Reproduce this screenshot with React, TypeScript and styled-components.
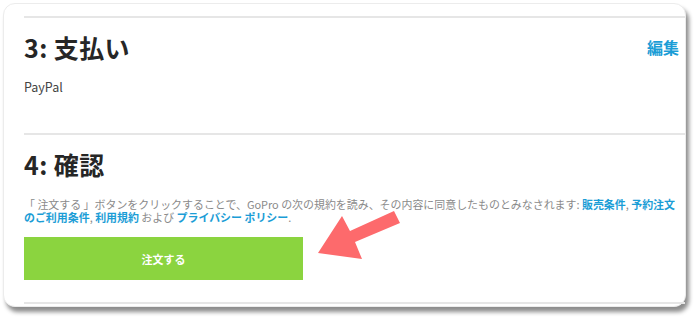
import styled, { createGlobalStyle } from 'styled-components';

const GlobalStyle = createGlobalStyle`
  html, body {
    margin: 0;
    padding: 0;
    background: #ffffff;
  }
  body {
    font-family: "Noto Sans CJK JP", "Noto Sans", sans-serif;
    color: #333;
  }
`;

const Page = styled.div`
  width: 700px;
  height: 321px;
  padding: 3px 0 0 3px;
  box-sizing: border-box;
  position: relative;
  overflow: hidden;
`;

const Card = styled.div`
  width: 683px;
  box-sizing: border-box;
  background: #fff;
  border-radius: 12px;
  border: 1px solid #ececec;
  box-shadow: 3px 5px 4px rgba(0, 0, 0, 0.45);
  padding: 12px 0 2px 20px;
  display: flex;
  flex-direction: column;
`;

const Divider = styled.hr`
  border: none;
  border-top: 2px solid #e6e6e6;
  margin: 0;
  width: 100%;
`;

const Step = styled.section<{ $gap: number }>`
  display: flex;
  flex-direction: column;
  padding-right: 6px;
  padding-top: ${({ $gap }) => $gap}px;
`;

const StepHeader = styled.div`
  display: flex;
  align-items: center;
  justify-content: space-between;
`;

const StepTitle = styled.h2`
  margin: 0;
  font-size: 25px;
  line-height: 30px;
  font-weight: 700;
  color: #262626;
  letter-spacing: 0.4px;
`;

const EditLink = styled.a`
  font-size: 16px;
  font-weight: 700;
  color: #1b9dd6;
  text-decoration: none;
`;

const Detail = styled.p`
  margin: 17px 0 38px;
  font-size: 12.5px;
  line-height: 16px;
  color: #444;
`;

const Terms = styled.p`
  margin: 19px 0 13px;
  font-size: 10.95px;
  line-height: 13px;
  color: #8a8a8a;
  white-space: nowrap;
`;

const TermLink = styled.a`
  color: #1b9dd6;
  font-weight: 700;
  text-decoration: none;
`;

const OrderButton = styled.button`
  width: 279px;
  height: 43px;
  border: none;
  background: #8bd43f;
  color: #fff;
  font-family: inherit;
  font-size: 11px;
  font-weight: 700;
  margin-bottom: 22px;
  cursor: pointer;
`;

const Arrow = styled.svg`
  position: absolute;
  left: 312px;
  top: 206px;
`;

export default function App() {
  return (
    <>
      <GlobalStyle />
      <Page>
        <Card>
          <Divider />
          <Step $gap={14}>
            <StepHeader>
              <StepTitle>3: 支払い</StepTitle>
              <EditLink href="#">編集</EditLink>
            </StepHeader>
            <Detail>PayPal</Detail>
          </Step>
          <Divider />
          <Step $gap={14}>
            <StepTitle>4: 確認</StepTitle>
            <Terms>
              「 注文する 」ボタンをクリックすることで、GoPro の次の規約を読み、その内容に同意したものとみなされます:{' '}
              <TermLink href="#">販売条件</TermLink>, <TermLink href="#">予約注文<br />のご利用条件</TermLink>,{' '}
              <TermLink href="#">利用規約</TermLink> および <TermLink href="#">プライバシー ポリシー</TermLink>.
            </Terms>
            <OrderButton>注文する</OrderButton>
          </Step>
          <Divider />
        </Card>
        <Arrow width="96" height="60" viewBox="0 0 96 60">
          <polygon points="6,47 30,10 38,25 82,5 88,17 43,36 50,53" fill="#fd6a6c" />
        </Arrow>
      </Page>
    </>
  );
}
